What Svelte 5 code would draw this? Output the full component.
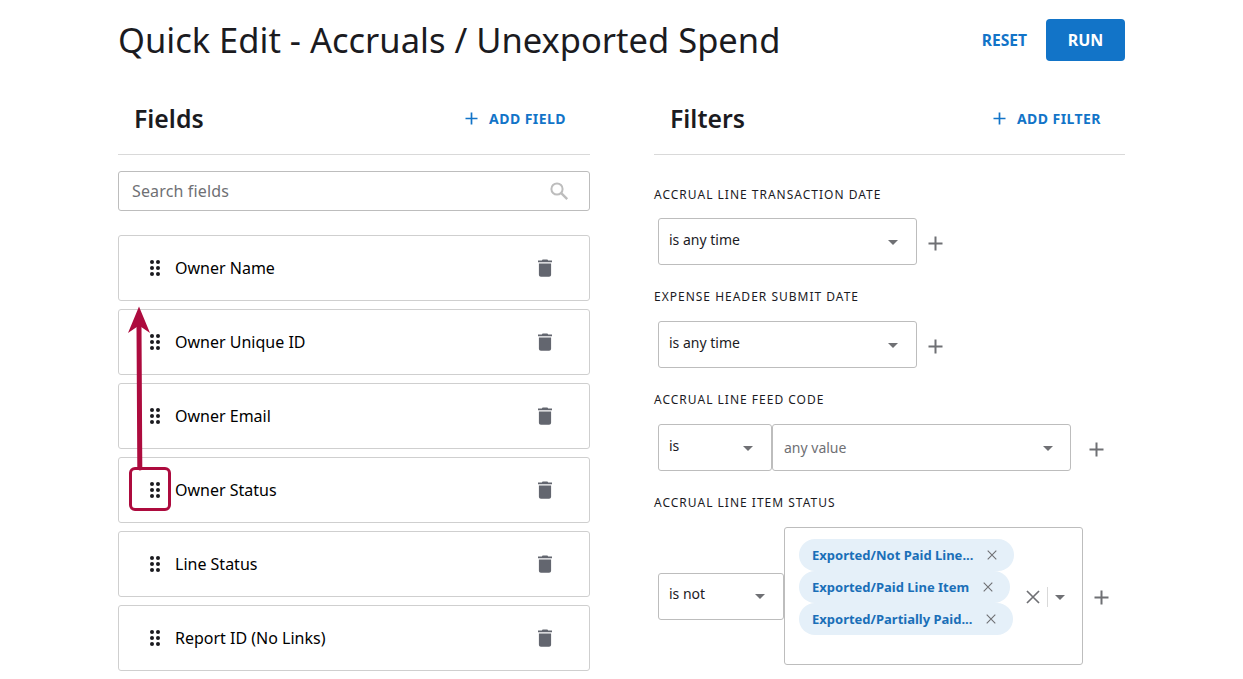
<script>
  const fields = ['Owner Name', 'Owner Unique ID', 'Owner Email', 'Owner Status', 'Line Status', 'Report ID (No Links)'];
  const chips = ['Exported/Not Paid Line...', 'Exported/Paid Line Item', 'Exported/Partially Paid...'];
</script>

{#snippet caret()}
  <svg class="caret" width="10" height="5" viewBox="0 0 10 5"><path d="M0 0h10L5 5z" fill="#6f7074" /></svg>
{/snippet}

{#snippet plus()}
  <svg class="plus" width="15" height="15" viewBox="0 0 15 15"><path d="M7.5 0.5v14M0.5 7.5h14" stroke="#6f7074" stroke-width="2" fill="none" /></svg>
{/snippet}

{#snippet blueplus()}
  <svg width="13" height="13" viewBox="0 0 13 13"><path d="M6.5 0.5v12M0.5 6.5h12" stroke="#1274c8" stroke-width="1.7" fill="none" /></svg>
{/snippet}

{#snippet cross(size, weight)}
  <svg width={size} height={size} viewBox="0 0 10 10"><path d="M0.7 0.7l8.6 8.6M9.3 0.7l-8.6 8.6" stroke="#6f7074" stroke-width={weight} fill="none" /></svg>
{/snippet}

<div class="page">
  <header class="top">
    <h1>Quick Edit - Accruals / Unexported Spend</h1>
    <div class="actions">
      <span class="reset">RESET</span>
      <button class="run">RUN</button>
    </div>
  </header>

  <div class="cols">
    <section class="fields">
      <div class="sec-head">
        <h2>Fields</h2>
        <span class="add">{@render blueplus()} ADD FIELD</span>
      </div>
      <div class="search">
        <span>Search fields</span>
        <svg width="20" height="20" viewBox="0 0 20 20"><circle cx="8" cy="8" r="5.6" stroke="#bdbdbd" stroke-width="2" fill="none" /><path d="M12.2 12.2l6 6" stroke="#bdbdbd" stroke-width="2.4" fill="none" /></svg>
      </div>
      <div class="list">
        {#each fields as f, i}
          <div class="row">
            <span class="grip" class:marked={i === 3}>
              <svg width="10" height="16" viewBox="0 0 10 16" fill="#1b1b1f">
                <circle cx="2" cy="2" r="2" /><circle cx="8" cy="2" r="2" />
                <circle cx="2" cy="8" r="2" /><circle cx="8" cy="8" r="2" />
                <circle cx="2" cy="14" r="2" /><circle cx="8" cy="14" r="2" />
              </svg>
            </span>
            <span class="name">{f}</span>
            <svg class="trash" width="14" height="18" viewBox="0 0 14 18" fill="#63666f">
              <path d="M4.6 0.4h4.8l0.8 1.1H14v1.7H0V1.5h3.8z" />
              <path d="M0.9 4.4h12.2v11.4c0 1.1-0.9 2-2 2H2.9c-1.1 0-2-0.9-2-2z" />
            </svg>
          </div>
        {/each}
      </div>
      <svg class="arrow" width="22" height="165" viewBox="0 0 22 165">
        <path d="M11.8 162L11 20" stroke="#ad0b3e" stroke-width="5" fill="none" stroke-linecap="round" />
        <path d="M11 0.5L22 27l-11-7.5L0 27z" fill="#ad0b3e" />
      </svg>
    </section>

    <section class="filters">
      <div class="sec-head">
        <h2>Filters</h2>
        <span class="add">{@render blueplus()} ADD FILTER</span>
      </div>

      <div class="flabel first">ACCRUAL LINE TRANSACTION DATE</div>
      <div class="frow">
        <div class="sel wide"><span>is any time</span>{@render caret()}</div>
        {@render plus()}
      </div>

      <div class="flabel">EXPENSE HEADER SUBMIT DATE</div>
      <div class="frow">
        <div class="sel wide"><span>is any time</span>{@render caret()}</div>
        {@render plus()}
      </div>

      <div class="flabel">ACCRUAL LINE FEED CODE</div>
      <div class="frow">
        <div class="sel op"><span>is</span>{@render caret()}</div>
        <div class="sel val"><span class="ph">any value</span>{@render caret()}</div>
        {@render plus()}
      </div>

      <div class="flabel">ACCRUAL LINE ITEM STATUS</div>
      <div class="frow multi-row">
        <div class="sel op-not"><span>is not</span>{@render caret()}</div>
        <div class="multi">
          <div class="chips">
            {#each chips as c}
              <span class="chip">{c}{@render cross(10, 1.1)}</span>
            {/each}
          </div>
          <div class="multi-ctl">
            {@render cross(14, 1.2)}
            <i class="sep"></i>
            {@render caret()}
          </div>
        </div>
        {@render plus()}
      </div>
    </section>
  </div>
</div>

<style>
  :global(body) {
    margin: 0;
    background: #fff;
    font-family: "Noto Sans", sans-serif;
    color: #1b1b1f;
  }

  .page {
    width: 1007px;
    margin-left: 118px;
    height: 679px;
    overflow: hidden;
  }

  .top {
    display: flex;
    justify-content: space-between;
    align-items: center;
    padding-top: 19px;
    height: 42px;
  }
  h1 {
    margin: 0;
    font-size: 34.5px;
    font-weight: 400;
    line-height: 42px;
  }
  .actions { display: flex; align-items: center; gap: 19px; }
  .reset { color: #1274c8; font-weight: 700; font-size: 15.6px; }
  .run {
    width: 79px;
    height: 42px;
    border: none;
    border-radius: 4px;
    background: #1274c8;
    color: #fff;
    font: 700 16px "Noto Sans", sans-serif;
  }

  .cols {
    display: grid;
    grid-template-columns: 472px 471px;
    column-gap: 64px;
    margin-top: 23px;
  }
  section { position: relative; }

  .sec-head {
    display: flex;
    justify-content: space-between;
    align-items: center;
    padding: 0 24px 2px 16px;
    border-bottom: 1px solid #d9d9d9;
    box-sizing: border-box;
    height: 71px;
  }
  h2 { margin: 0; font-size: 24.8px; font-weight: 600; }
  .add {
    display: flex;
    align-items: center;
    gap: 11px;
    color: #1274c8;
    font-size: 14px;
    font-weight: 700;
    letter-spacing: 0.45px;
  }

  .search {
    display: flex;
    justify-content: space-between;
    align-items: center;
    height: 40px;
    box-sizing: border-box;
    margin-top: 16px;
    padding: 0 20px 0 13px;
    border: 1px solid #bdbdbd;
    border-radius: 3px;
    font-size: 16px;
    letter-spacing: 0.15px;
    color: #6f7074;
  }

  .list {
    display: flex;
    flex-direction: column;
    gap: 8px;
    margin-top: 24px;
  }
  .row {
    display: flex;
    align-items: center;
    height: 66px;
    box-sizing: border-box;
    padding: 0 37px 0 31px;
    border: 1px solid #cfcfcf;
    border-radius: 3px;
    font-size: 16px;
    color: #000;
  }
  .grip { position: relative; display: flex; }
  .grip.marked::before {
    content: "";
    position: absolute;
    left: -21px;
    top: -15px;
    width: 42px;
    height: 44px;
    box-sizing: border-box;
    border: 3px solid #ad0b3e;
    border-radius: 6px;
  }
  .name { margin-left: 15px; flex: 1; }

  .arrow { position: absolute; left: 10px; top: 222px; }

  .flabel {
    margin-top: 24px;
    font-size: 12px;
    line-height: 16px;
    letter-spacing: 1px;
    color: #1b1b1f;
  }
  .flabel.first { margin-top: 32px; }
  .flabel.first + .frow { margin-top: 15px; }

  .frow {
    display: flex;
    align-items: center;
    margin-top: 16px;
    padding-left: 4px;
  }
  .sel {
    display: flex;
    justify-content: space-between;
    align-items: center;
    height: 47px;
    box-sizing: border-box;
    border: 1px solid #bdbdbd;
    border-radius: 3px;
    padding: 0 18px 0 10px;
    font-size: 14px;
  }
  .sel span { position: relative; top: -2px; }
  .sel .ph { top: 0; color: #6f7074; }
  .caret { margin-top: 1px; }
  .wide { width: 259px; }
  .op { width: 114px; }
  .val { width: 299px; padding-left: 11px; padding-right: 17px; }
  .op-not { width: 126px; }
  .op-not span { top: -3px; }
  .plus { margin: 3px 0 0 11px; }
  .val + .plus { margin-left: 18px; }
  .multi + .plus { margin-left: 11px; }

  .multi {
    display: flex;
    align-items: center;
    width: 299px;
    height: 138px;
    box-sizing: border-box;
    border: 1px solid #bdbdbd;
    border-radius: 3px;
    padding: 11px 17px 30px 14px;
  }
  .chips {
    display: flex;
    flex-direction: column;
    align-items: flex-start;
    flex: 1;
  }
  .chip {
    display: flex;
    align-items: center;
    gap: 14px;
    height: 32px;
    padding: 0 17px 0 13px;
    border-radius: 16px;
    background: #e5f0f9;
    color: #1a6fb8;
    font-size: 13px;
    font-weight: 700;
    white-space: nowrap;
  }
  .multi-ctl {
    display: flex;
    align-items: center;
    position: relative;
    top: 10px;
  }
  .sep { width: 1px; height: 20px; background: #d9d9d9; margin: 0 7px; }
</style>
